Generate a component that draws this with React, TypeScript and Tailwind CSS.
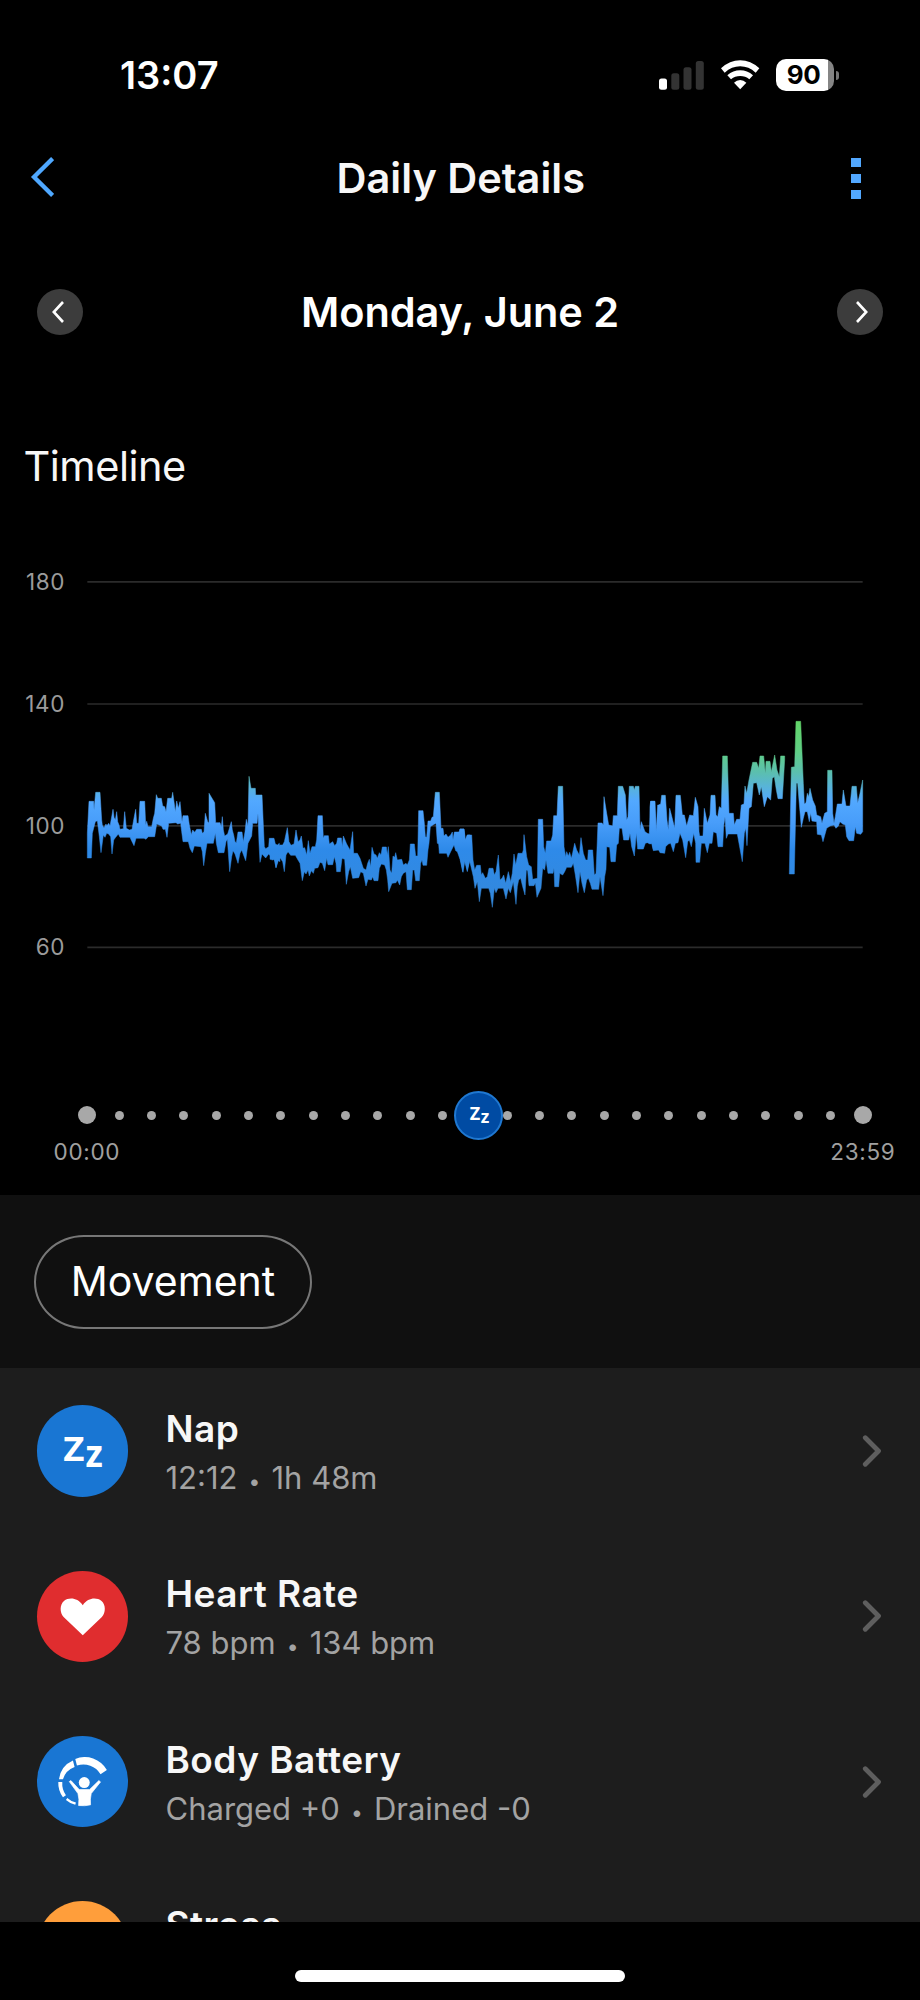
import type { ReactNode } from 'react'

interface ChartBlock {
  x: number
  upper: string
  lower: string
}

interface Metric {
  name: string
  details: string[]
  color: string
  icon: ReactNode
}

const Y_TICKS = [180, 140, 100, 60]

// Heart rate envelope, one block per stretch of the day
const BLOCKS: ChartBlock[] = [
  {
    x: 0,
    upper:
      '22,474 22,400 27,304 41,304 42,330 47,277 60,277 65,360 67,376 72,383 78,372 80,378 86,370 90,378 96,345 99,328 102,352 106,360 110,335 113,365 117,375 120,388 130,386 134,335 139,385 148,390 156,388 160,365 167,328 170,370 176,370 180,304 194,304 197,375 200,364 204,380 215,380 220,355 224,340 229,284 233,295 244,295 248,318 254,320 258,335 263,295 275,295 278,277 282,305 286,335 290,303 295,325 300,305 306,365 309,347 324,347 328,375 334,404 338,390 344,397 350,388 364,388 367,400 372,395 376,340 383,365 387,368 387,280 404,308 407,368 420,368 424,380 427,350 430,390 434,408 443,402 454,365 457,390 461,405 465,425 469,428 474,396 486,396 490,425 495,395 499,358 504,378 507,229 513,265 526,265 527,285 546,285 550,375 553,440 557,446 566,440 568,415 582,415 586,432 592,435 598,430',
    lower:
      '600,485 593,480 588,503 584,480 578,475 566,462 557,474 546,462 540,487 537,430 534,340 531,370 518,370 515,408 504,430 497,482 485,450 480,460 474,490 465,462 459,452 455,470 449,515 442,418 438,425 432,458 415,458 409,430 406,400 400,430 381,430 376,460 371,497 367,455 363,440 343,438 337,458 330,445 325,425 309,425 305,395 302,370 293,372 288,368 266,370 261,412 256,388 249,388 245,378 230,372 224,410 205,410 198,418 192,415 168,415 162,437 156,425 150,412 120,412 115,402 107,412 101,420 96,462 92,410 86,402 80,400 75,412 70,405 63,458 58,410 52,362 46,365 37,400 34,474',
  },
  {
    x: 570,
    upper:
      '0,417 10,417 14,435 20,445 26,440 30,435 38,435 43,425 52,383 57,425 63,436 72,432 78,390 84,425 90,420 94,408 99,445 104,443 110,465 115,422 120,460 126,440 136,440 140,420 144,347 157,347 160,415 163,407 175,407 178,432 188,425 194,437 200,430 203,414 214,414 217,440 220,408 230,432 240,450 248,395 251,460 262,460 270,475 280,505 288,510 293,490 298,478 302,500 306,442 312,462 318,465 322,475 328,458 333,464 337,441 349,441 352,465 355,440 360,510 365,520 369,468 374,472 377,458 382,480 395,478 400,495 408,490 412,495 418,480 421,432 433,432 437,468 443,468 446,332 459,332 463,370 466,410 470,412 474,363 482,363 486,352 490,350 496,277 508,277 513,385 519,385 522,408 528,402 534,412 542,405 547,396 549,420 553,396 567,396 570,387 582,387 586,420 592,405 600,405',
    lower:
      '600,480 592,512 585,480 579,517 570,478 562,455 557,452 552,435 542,455 534,472 530,460 508,460 506,432 502,430 498,370 490,374 481,380 477,430 474,450 470,496 459,496 456,480 452,490 448,542 437,542 433,510 428,510 424,569 412,569 408,515 400,520 394,530 389,555 382,540 378,548 366,550 356,575 353,540 349,510 344,495 334,492 328,505 324,542 312,542 308,530 304,540 294,538 288,558 280,520 272,515 266,533 248,535 241,500 236,515 229,553 224,478 216,475 211,515 200,515 198,490 193,470 188,494 174,494 170,475 164,512 157,490 150,487 144,503 134,505 130,520 124,512 118,528 114,510 108,522 103,515 97,542 90,490 84,480 76,466 62,466 54,455 48,465 43,515 38,485 30,473 24,485 18,503 13,478 8,480 0,478',
  },
  {
    x: 1140,
    upper:
      '0,387 12,387 16,425 22,405 35,405 39,480 44,510 50,496 61,496 64,525 68,518 76,535 82,530 87,505 99,505 103,525 108,515 115,465 120,540 126,535 131,525 137,550 145,515 152,545 157,520 162,462 167,495 174,460 187,460 190,450 192,404 200,470 206,495 214,500 218,538 232,535 235,358 248,358 251,440 256,460 260,423 273,423 278,405 281,347 291,347 295,259 308,259 312,440 317,470 320,455 325,468 329,457 334,475 338,458 344,430 350,450 358,465 363,413 370,460 377,480 383,480 385,450 398,450 403,525 408,520 412,420 414,369 426,369 430,375 432,290 440,340 446,375 458,378 460,347 472,347 475,259 488,259 496,285 500,360 504,350 508,259 520,259 523,270 526,259 537,259 540,390 544,365 555,395 562,400 568,402 572,304 585,304 588,400 593,315 600,315',
    lower:
      '600,448 594,450 580,452 575,430 570,432 562,428 556,430 550,447 533,447 529,400 523,468 515,440 510,400 506,420 491,420 486,385 478,385 475,430 470,435 466,485 453,485 449,442 440,440 438,508 434,530 429,587 420,530 416,568 396,568 391,550 385,535 380,540 373,578 366,550 360,515 354,578 346,525 340,490 334,502 320,502 314,515 308,525 299,520 296,560 284,560 282,505 279,520 264,520 258,480 254,510 248,505 243,565 231,592 226,548 222,557 207,557 203,512 199,510 195,585 188,560 182,535 176,540 172,560 168,613 160,545 151,578 145,565 138,597 130,565 114,565 108,578 103,565 97,622 91,580 86,565 64,565 58,605 52,545 45,565 40,530 33,500 28,480 22,515 13,480 8,515 0,470',
  },
  {
    x: 1710,
    upper:
      '0,320 2,304 14,304 18,400 22,375 26,315 32,312 35,286 46,286 51,360 55,390 59,325 68,360 74,385 78,286 91,286 97,345 103,345 110,378 119,345 130,347 136,292 144,320 147,395 149,408 159,408 163,325 172,370 180,345 183,286 195,286 198,345 203,350 208,320 214,325 218,168 232,168 237,340 250,340 253,375 260,358 270,358 274,315 282,312 285,258 290,280 297,240 308,187 320,187 326,205 330,168 341,168 346,220 348,184 360,184 364,215 374,165 381,210 388,230 392,168 404,168',
    lower:
      '404,180 397,296 384,296 379,270 373,230 367,235 362,300 352,290 343,320 334,260 328,285 320,248 310,250 304,320 297,325 291,437 287,385 283,400 277,485 267,430 262,402 234,402 229,415 225,350 221,378 218,440 204,440 200,400 190,395 186,430 178,430 172,458 165,430 154,430 149,487 138,487 137,430 131,400 124,440 118,420 113,425 107,473 98,420 90,400 84,428 76,430 70,455 62,430 55,432 47,440 44,460 30,458 26,450 10,448 6,430 0,430',
  },
  {
    x: 1710,
    upper:
      '418,522 424,202 434,200 438,64 452,64 460,250 463,312 468,308 472,280 476,290 480,265 488,300 496,318 500,345 512,350 516,370 524,340 532,335 533,211 546,211 548,340 552,370 556,350 562,312 576,312 580,270 588,318 600,318 606,259 619,259 623,310 630,280 638,240',
    lower:
      '638,395 632,403 620,400 616,380 611,422 597,422 590,410 586,375 578,372 570,365 565,378 558,385 552,375 540,378 530,385 519,425 514,405 502,403 500,365 486,363 482,340 478,365 472,335 465,335 460,355 454,382 447,300 443,250 439,250 433,522',
  },
]

function ZzIcon({ className }: { className: string }) {
  return (
    <svg viewBox="0 0 92 92" className={className} fill="white" fontFamily="Open Sans, sans-serif" fontWeight={700}>
      <text x="26.3" y="56" fontSize="34.5" textLength="21.3" lengthAdjust="spacingAndGlyphs">Z</text>
      <text x="48.8" y="62.200" fontSize="38" textLength="17.4" lengthAdjust="spacingAndGlyphs">z</text>
    </svg>
  )
}

function HeartIcon() {
  return (
    <svg viewBox="0 0 275 275" className="size-full" fill="white">
      <path d="M137.500 193 L80 138 C68 125 68 101 81 90 C97 78 122 80 137.500 103 C153 80 178 78 194 90 C207 101 207 125 195 138 Z" />
    </svg>
  )
}

function BodyBatteryIcon() {
  return (
    <svg viewBox="14 15 275 275" className="size-full" fill="white">
      <path d="M129 84 A76 76 0 0 1 224 117 L205 130 A60 60 0 0 0 134 104 Z" />
      <path d="M122 89 A72 72 0 0 0 80 145 L92 145 A56 56 0 0 1 127 108 Z" />
      <path d="M78 153 A73 73 0 0 0 92 199 L101 193 A62 62 0 0 1 90 153 Z" />
      <path d="M105 201 A62 62 0 0 0 131 215 L129 222 A72 72 0 0 1 101 207 Z" />
      <circle cx="156" cy="155" r="16.500" />
      <path
        d="M111 152 L116 149 L141 176 H172 L200 149 L205 153 L177 188 Q173 205 175 222 Q158 226 139 224 Q142 205 137 188 Z"
        stroke="white"
        strokeWidth="2"
        strokeLinejoin="round"
      />
    </svg>
  )
}

const METRICS: Metric[] = [
  { name: 'Nap', details: ['12:12', '1h 48m'], color: 'bg-[#1976d3]', icon: <ZzIcon className="size-full" /> },
  { name: 'Heart Rate', details: ['78 bpm', '134 bpm'], color: 'bg-[#e02d2f]', icon: <HeartIcon /> },
  { name: 'Body Battery', details: ['Charged +0', 'Drained -0'], color: 'bg-[#1976d3]', icon: <BodyBatteryIcon /> },
  { name: 'Stress', details: [], color: 'bg-[#ff9e3b]', icon: null },
]

function StatusBar() {
  return (
    <div className="flex h-[150px] shrink-0 items-center justify-between pl-[120px] pr-[81px]">
      <span className="text-[38px] font-semibold">13:07</span>
      <div className="flex items-center">
        <svg viewBox="0 0 45 30" className="mr-[17px] h-[30px] w-[45px]">
          <rect x="0" y="18.500" width="8" height="11.300" rx="2.500" fill="#fff" />
          <rect x="12.300" y="13.300" width="8" height="16.500" rx="2.500" fill="#333" />
          <rect x="24.500" y="7.300" width="8" height="22.500" rx="2.500" fill="#333" />
          <rect x="36.800" y="1" width="8" height="28.800" rx="2.500" fill="#333" />
        </svg>
        <svg viewBox="244 59 116 90" className="mr-[16px] h-[30px] w-[38.700px]" fill="white">
          <path d="M244 84 Q270 60 301.500 60 Q333 60 359 84 L348 97 Q327 78 301.500 78 Q276 78 255 97 Z" />
          <path d="M263 105 Q280 90 301.500 90 Q323 90 340 105 L329 117 Q317 107 301.500 107 Q286 107 274 117 Z" />
          <path d="M283 127 Q291 119 301.500 119 Q312 119 320 127 L301.500 147 Z" />
        </svg>
        <div className="flex h-[32px] w-[58px] items-center justify-center overflow-hidden rounded-[10px] bg-linear-to-r from-white from-90% to-[#858585] to-90%">
          <span className="pr-[2px] text-[26px] font-bold leading-none tracking-[-0.5px] text-black">90</span>
        </div>
        <div className="ml-[2px] h-[9px] w-[3.500px] rounded-r-full bg-[#777]" />
      </div>
    </div>
  )
}

function Header() {
  return (
    <div className="flex h-[56px] shrink-0 items-center justify-between pl-[30px] pr-[59px]">
      <svg viewBox="0 0 24 40" className="mb-[3px] h-[40px] w-[24px]" fill="none" stroke="#4fa8ff" strokeWidth="4.300">
        <path d="M22.600 1.500 L4 20 L22.600 38.500" />
      </svg>
      <h1 className="pl-[16px] pt-[1px] text-[41.500px] font-semibold leading-none text-[#f7f7f7]">Daily Details</h1>
      <div className="flex w-[9.500px] flex-col gap-[7px] pt-[1px]">
        {[0, 1, 2].map(i => <div key={i} className="h-[9px] w-full bg-[#52a8ff]" />)}
      </div>
    </div>
  )
}

function DateNav() {
  return (
    <div className="mt-[83px] flex h-[46px] shrink-0 items-center justify-between px-[36.500px]">
      <div className="flex size-[46px] items-center justify-center rounded-full bg-[#3c3c3c]">
        <svg viewBox="0 0 12 22" className="mr-[4px] h-[22px] w-[12px]" fill="none" stroke="white" strokeWidth="2.600">
          <path d="M11 1 L1.800 11 L11 21" />
        </svg>
      </div>
      <h2 className="pt-[1px] text-[41.500px] font-semibold leading-none tracking-[-0.1px]">Monday, June 2</h2>
      <div className="flex size-[46px] items-center justify-center rounded-full bg-[#3c3c3c]">
        <svg viewBox="0 0 12 22" className="ml-[4px] h-[22px] w-[12px]" fill="none" stroke="white" strokeWidth="2.600">
          <path d="M1 1 L10.200 11 L1 21" />
        </svg>
      </div>
    </div>
  )
}

function HeartRateChart() {
  return (
    <div className="mt-[31px] flex h-[487.200px] shrink-0">
      <div className="flex w-[65px] flex-col text-right text-[22.500px] tracking-[0.6px] text-[#9b9b9b]">
        {Y_TICKS.map(tick => (
          <div key={tick} className="flex h-[121.800px] items-center justify-end">{tick}</div>
        ))}
      </div>
      <svg viewBox="18 -537 2334 1461.600" className="ml-[21px] h-[487.200px] w-[778px]">
        <defs>
          <linearGradient id="bpm" gradientUnits="userSpaceOnUse" x1="0" y1="60" x2="0" y2="600">
            <stop offset="0" stopColor="#62d567" />
            <stop offset="0.170" stopColor="#60cf84" />
            <stop offset="0.290" stopColor="#5bbfae" />
            <stop offset="0.370" stopColor="#58b4d8" />
            <stop offset="0.450" stopColor="#52a8ff" />
            <stop offset="0.570" stopColor="#489dfa" />
            <stop offset="0.720" stopColor="#2e8ae9" />
            <stop offset="1" stopColor="#3388dc" />
          </linearGradient>
        </defs>
        <path d="M22 -354.500H2348M22 12H2348M22 377.500H2348M22 742H2348" stroke="#2b2b2b" strokeWidth="5" />
        {BLOCKS.map((block, i) => (
          <polygon
            key={i}
            transform={`translate(${block.x} 0)`}
            points={`${block.upper} ${block.lower}`}
            fill="url(#bpm)"
            stroke="url(#bpm)"
            strokeWidth="1.500"
          />
        ))}
      </svg>
    </div>
  )
}

function DayAxis() {
  return (
    <>
      <div className="relative mx-[78px] mt-[82.500px] flex h-[49px] w-[794px] shrink-0 items-center justify-between">
        {Array.from({ length: 25 }, (_, i) => (
          <div key={i} className="flex w-[18px] justify-center">
            <div className={i === 0 || i === 24 ? 'size-[18px] rounded-full bg-[#a8a8a8]' : 'size-[9px] rounded-full bg-[#a8a8a8]'} />
          </div>
        ))}
        <div className="absolute left-[376px] top-0 flex size-[49px] items-center justify-center rounded-full border-2 border-[#1f78d1] bg-[#004ba3]">
          <ZzIcon className="mt-[1px] ml-[1px] size-[45px] shrink-0" />
        </div>
      </div>
      <div className="flex h-[24px] shrink-0 items-center justify-between pl-[53.500px] pr-[24.500px] text-[22.500px] tracking-[0.7px] text-[#a0a0a0]">
        <span>00:00</span>
        <span>23:59</span>
      </div>
    </>
  )
}

function MetricRow({ metric }: { metric: Metric }) {
  return (
    <div className="flex h-[165.300px] shrink-0 items-center pl-[36.500px] pr-[38px]">
      <div className={`size-[91.500px] shrink-0 rounded-full ${metric.color}`}>{metric.icon}</div>
      <div className="ml-[37.500px] flex flex-1 flex-col pt-[5px]">
        <span className="h-[48px] text-[37px] font-semibold leading-[48px] tracking-[0.45px] text-[#f7f7f7]">{metric.name}</span>
        <div className="flex h-[49px] text-[31px] leading-[49px] text-[#a3a3a3]">
          {metric.details.map((detail, i) => (
            <span key={detail} className="whitespace-nowrap">
              {i > 0 && <span className="inline-block w-[34px] text-center text-[21px]">•</span>}
              {detail}
            </span>
          ))}
        </div>
      </div>
      <svg viewBox="0 0 20 32" className="h-[32px] w-[20px]" fill="none" stroke="#5e5e5e" strokeWidth="4.800" strokeLinecap="round" strokeLinejoin="round">
        <path d="M3.300 2.800 L16.500 16 L3.300 29.200" />
      </svg>
    </div>
  )
}

export default function App() {
  return (
    <div className="flex h-[2000px] w-[920px] flex-col overflow-hidden bg-black font-['Inter',sans-serif] text-white">
      <div className="flex h-[1195.300px] shrink-0 flex-col">
        <StatusBar />
        <Header />
        <DateNav />
        <h3 className="mt-[108px] h-[47px] shrink-0 pl-[23.500px] text-[41.500px] leading-[47px] tracking-[-0.5px] text-[#f7f7f7]">Timeline</h3>
        <HeartRateChart />
        <DayAxis />
      </div>

      {/* Event filter */}
      <div className="flex h-[173.200px] shrink-0 items-center bg-[#101010] pl-[34px]">
        <button className="flex h-[94px] w-[278px] items-center justify-center rounded-[50px/47px] border-2 border-[#777] text-[41px]">
          Movement
        </button>
      </div>

      <div className="flex h-[554px] shrink-0 flex-col overflow-hidden bg-[#1d1d1d]">
        {METRICS.map(metric => <MetricRow key={metric.name} metric={metric} />)}
      </div>

      {/* Home indicator */}
      <div className="mx-auto mt-[48px] h-[12px] w-[330px] shrink-0 rounded-full bg-white" />
    </div>
  )
}
